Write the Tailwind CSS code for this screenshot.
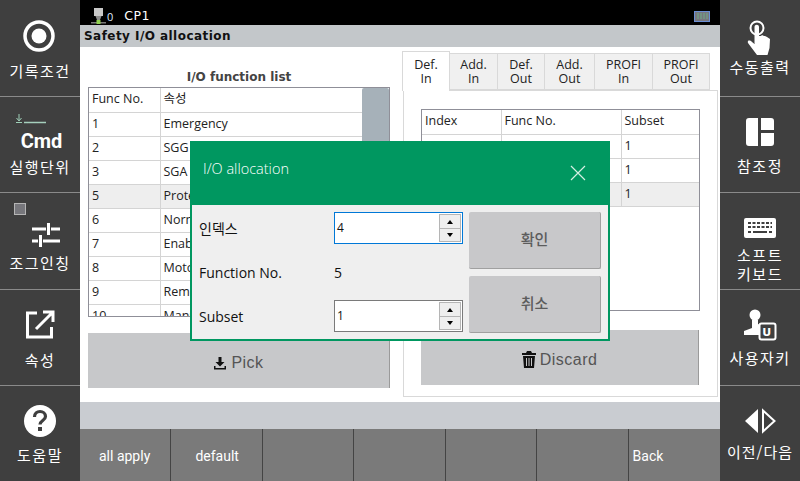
<!DOCTYPE html>
<html lang="ko">
<head>
  <meta charset="UTF-8">
  <title>Safety I/O allocation</title>
  <script src="https://cdn.jsdelivr.net/npm/@tailwindcss/browser@4"></script>
</head>
<body class="bg-white">
  <div class="relative flex w-[800px] h-[481px] overflow-hidden font-['Open_Sans','Noto_Sans_CJK_KR',sans-serif] text-[12.500px] text-[#222]">

    <!-- left side menu -->
    <aside class="w-[80px] shrink-0 bg-[#3f3f3f] text-white flex flex-col text-center font-['Noto_Sans_CJK_KR',sans-serif] text-[15px] leading-[20px] tracking-[1.500px]">
      <div class="h-[97px] border-b border-[#8a8a8a] pt-[16px]">
        <svg class="mx-auto" width="40" height="40" viewBox="0 0 40 40"><circle cx="19" cy="20" r="14" fill="none" stroke="#fff" stroke-width="3.500"/><circle cx="19" cy="20" r="7.500" fill="#fff"/></svg>
        <div class="mt-[5px]">기록조건</div>
      </div>
      <div class="relative h-[96px] border-b border-[#8a8a8a] pt-[33px]">
        <svg class="absolute left-[15px] top-[17px]" width="32" height="10" viewBox="0 0 32 10"><path d="M4 0v6M1.500 4L4 7l2.500-3M1 8.500h6" stroke="#9fd0b8" fill="none"/><path d="M9 8.500h22" stroke="#a5cfbc" stroke-width="1.500"/></svg>
        <div class="font-['Roboto',sans-serif] font-bold text-[20px] leading-[22px] tracking-normal pl-[3px]">Cmd</div>
        <div class="mt-[5px]">실행단위</div>
      </div>
      <div class="relative h-[97px] border-b border-[#8a8a8a] pt-[29px]">
        <span class="absolute left-[14px] top-[10px] w-[12px] h-[12px] bg-[#77777c] border border-[#b5b5b5]"></span>
        <svg class="ml-[31px]" width="30" height="26" viewBox="0 0 30 26" fill="none" stroke="#fff" stroke-width="3"><path d="M1 7h14M20 7h9M1 19h6M12 19h17M17.500 1v12M9.500 13v12"/></svg>
        <div class="mt-[5px]">조그인칭</div>
      </div>
      <div class="h-[96px] border-b border-[#8a8a8a] pt-[19px]">
        <svg class="mx-auto" width="32" height="32" viewBox="0 0 32 32" fill="none" stroke="#fff" stroke-width="3"><path d="M13 4H3.500v24h24V18M19 3h10v10M28 4L12 20"/></svg>
        <div class="mt-[9px]">속성</div>
      </div>
      <div class="flex-1 pt-[18px]">
        <svg class="mx-auto" width="34" height="34" viewBox="0 0 34 34"><circle cx="17" cy="17" r="16" fill="#fff"/><path d="M11.500 13c0-3.500 2.500-5.500 5.500-5.500s5.500 2 5.500 5c0 4-5.500 4-5.500 8" fill="none" stroke="#3f3f3f" stroke-width="3.200"/><rect x="15" y="23" width="4" height="4" fill="#3f3f3f"/></svg>
        <div class="mt-[7px]">도움말</div>
      </div>
    </aside>

    <!-- center -->
    <main class="relative w-[640px] shrink-0 flex flex-col">
      <header class="h-[25px] bg-black text-white flex items-center pl-[10px] pr-[10px] pt-[7px]">
        <svg width="18" height="18" viewBox="0 0 18 18"><rect x="4" y="1" width="9" height="8" fill="#c9c9c9"/><path d="M5.500 9h6l-1.500 4H7z" fill="#8d8d8d"/><rect x="1" y="15" width="15" height="1.500" fill="#777"/><rect x="6.500" y="13" width="4" height="4" fill="#8fd14f"/></svg>
        <span class="text-[11px] text-[#dfe8ff] -ml-[1px] mt-[3px]">0</span>
        <span class="ml-[11px] font-['DejaVu_Sans',sans-serif] text-[12.500px] tracking-[0.500px]">CP1</span>
        <svg class="ml-auto" width="16" height="11" viewBox="0 0 16 11"><rect x="0.500" y="0.500" width="15" height="10" fill="#77777f" stroke="#6b8fd6"/><path d="M4 2v6M7 2v6M10 2v6M13 2v6" stroke="#6fae86"/></svg>
      </header>
      <div class="h-[22px] bg-[#c3c7ca] pl-[4px] font-['DejaVu_Sans',sans-serif] font-bold text-[12px] leading-[23px] tracking-[0.450px] text-[#111]">Safety I/O allocation</div>

      <div class="h-[355px] flex bg-white">
        <!-- function list -->
        <section class="w-[323px] shrink-0 pl-[8px] pr-[13px]">
          <h2 class="h-[40px] pt-[21px] text-center font-['DejaVu_Sans',sans-serif] font-bold text-[12px] leading-[18px] text-[#444]">I/O function list</h2>
          <div class="relative h-[230px] border border-[#8f8f98] overflow-hidden">
            <table class="w-[273px] table-fixed border-collapse text-left">
              <colgroup><col class="w-[71px]"><col></colgroup>
              <tbody class="[&_td]:h-[24px] [&_td]:px-[3px] [&_td]:border-b [&_td]:border-[#d4d4d4] [&_td:first-child]:border-r">
                <tr><td>Func No.</td><td>속성</td></tr>
                <tr><td>1</td><td>Emergency</td></tr>
                <tr><td>2</td><td>SGG</td></tr>
                <tr><td>3</td><td>SGA</td></tr>
                <tr class="bg-[#eeeeee]"><td>5</td><td>Protective</td></tr>
                <tr><td>6</td><td>Normal</td></tr>
                <tr><td>7</td><td>Enable</td></tr>
                <tr><td>8</td><td>Motor</td></tr>
                <tr><td>9</td><td>Remote</td></tr>
                <tr><td>10</td><td>Manual</td></tr>
              </tbody>
            </table>
            <span class="absolute right-0 top-0 w-[27px] h-[120px] bg-[#a6b1b9] rounded-t-[2px]"></span>
          </div>
          <button class="mt-[16px] w-full h-[55px] pt-[4px] bg-[#c7c8ca] border-r border-[#9a9a9a] flex items-center justify-center gap-[4px] font-['Liberation_Sans',sans-serif] text-[16px] text-[#555] tracking-[0.500px]">
            <svg width="14" height="14" viewBox="0 0 14 14" fill="#111"><path d="M5.500 1h3v5h3L7 10.500 2.500 6h3z"/><path d="M1 10h1.500v2h9v-2H13v3.500H1z"/></svg>
            Pick
          </button>
        </section>

        <!-- allocation tabs -->
        <section class="flex-1 pt-[4px]">
          <div class="flex h-[39px] text-center text-[12.500px] leading-[14px] [&>div]:border [&>div]:border-[#d9d9d9] [&>div]:bg-[#f0f0f0] [&>div]:pt-[4px] [&>div]:mt-[2px] [&>div]:-ml-px">
            <div class="w-[48px] !mt-0 !bg-white !border-b-0 relative z-10 h-[40px] !pt-[6px]">Def.<br>In</div>
            <div class="w-[49px]">Add.<br>In</div>
            <div class="w-[48px]">Def.<br>Out</div>
            <div class="w-[51px]">Add.<br>Out</div>
            <div class="w-[59px]">PROFI<br>In</div>
            <div class="w-[58px]">PROFI<br>Out</div>
          </div>
          <div class="w-[315px] h-[307px] border border-[#d9d9d9] px-[17px] pt-[18px]">
            <div class="h-[202px] w-[279px] border border-[#8f8f98]">
              <table class="w-full table-fixed border-collapse text-left">
                <colgroup><col class="w-[79px]"><col class="w-[120px]"><col></colgroup>
                <tbody class="[&_td]:h-[24px] [&_td]:px-[3px] [&_td]:border-b [&_td]:border-[#d4d4d4] [&_td:not(:last-child)]:border-r">
                  <tr><td>Index</td><td>Func No.</td><td>Subset</td></tr>
                  <tr><td>1</td><td>1</td><td>1</td></tr>
                  <tr><td>2</td><td>2</td><td>1</td></tr>
                  <tr class="bg-[#eeeeee]"><td>3</td><td>3</td><td>1</td></tr>
                </tbody>
              </table>
            </div>
            <button class="mt-[19px] w-[278px] h-[55px] pt-[4px] bg-[#c7c8ca] border-r border-[#9a9a9a] flex items-center justify-center gap-[4px] font-['Liberation_Sans',sans-serif] text-[16px] text-[#555] tracking-[0.500px]">
              <svg width="14" height="17" viewBox="0 0 14 17" fill="#111"><path d="M5 0h4l1 2h4v2H0V2h4z"/><path d="M1 5h12l-1 12H2zM4 7v8h1V7zm2.500 0v8h1V7zM9 7v8h1V7z" fill-rule="evenodd"/></svg>
              Discard
            </button>
          </div>
        </section>
      </div>

      <div class="h-[27px] bg-[#c9ccd1]"></div>
      <!-- function keys -->
      <footer class="flex-1 grid grid-cols-7 bg-[#7a7a7a] text-white font-['Roboto',sans-serif] text-[14px] [&>div]:border-r [&>div]:border-[#444] [&>div]:pt-[17px] [&>div]:leading-[20px]">
        <div class="pl-[19px]">all apply</div>
        <div class="pl-[24px]">default</div>
        <div></div>
        <div></div>
        <div></div>
        <div></div>
        <div class="!border-r-0 pl-[4px]">Back</div>
      </footer>
    </main>

    <!-- right side menu -->
    <aside class="w-[80px] shrink-0 bg-[#3f3f3f] text-white flex flex-col text-center font-['Noto_Sans_CJK_KR',sans-serif] text-[15px] leading-[20px] tracking-[1.500px]">
      <div class="h-[97px] border-b border-[#8a8a8a] pt-[20px]">
        <svg class="mx-auto" width="26" height="36" viewBox="0 0 26 36"><circle cx="10" cy="8" r="6.500" fill="none" stroke="#fff" stroke-width="2"/><path d="M7.500 7c0-3 4.500-3 4.500 0v9l2 0 1-1 2 1 1 0 2 1 3 2-.5 9-2 7H10L1 23c-1-3 2-3 4-1l2.500 2z" fill="#fff"/></svg>
        <div class="mt-[1px]">수동출력</div>
      </div>
      <div class="h-[96px] border-b border-[#8a8a8a] pt-[21px]">
        <svg class="mx-auto" width="28" height="28" viewBox="0 0 28 28" fill="#fff"><path d="M3 0h9v28H3a3 3 0 0 1-3-3V3a3 3 0 0 1 3-3zM15 0h10a3 3 0 0 1 3 3v9H15zM15 15h13v10a3 3 0 0 1-3 3H15z"/></svg>
        <div class="mt-[10px]">참조정</div>
      </div>
      <div class="h-[97px] border-b border-[#8a8a8a] pt-[25px]">
        <svg class="mx-auto" width="32" height="20" viewBox="0 0 32 20"><rect width="32" height="20" rx="2" fill="#fff"/><path d="M4 5h24M4 9h24" stroke="#3f3f3f" stroke-width="2" stroke-dasharray="3 1.500"/><path d="M4 14h3M9 14h14M25 14h3" stroke="#3f3f3f" stroke-width="2"/></svg>
        <div class="mt-[7px] leading-[19px]">소프트<br>키보드</div>
      </div>
      <div class="relative h-[96px] border-b border-[#8a8a8a] pt-[18px]">
        <svg class="ml-[22px]" width="36" height="36" viewBox="0 0 36 36"><circle cx="13" cy="7" r="5.500" fill="#fff"/><path d="M10 12h6v4l5 2v3h-3v6H2v-4l8-3z" fill="#fff"/><rect x="17.500" y="15.500" width="16" height="16" rx="2" fill="#3f3f3f" stroke="#fff" stroke-width="2"/><text x="25.500" y="28" text-anchor="middle" font-family="DejaVu Sans" font-weight="700" font-size="11" fill="#fff">U</text></svg>
        <div class="mt-[4px]">사용자키</div>
      </div>
      <div class="flex-1 pt-[22px]">
        <svg class="mx-auto" width="32" height="26" viewBox="0 0 32 26"><path d="M14 1v24L1 13z" fill="#fff"/><path d="M19 2.500v21L30.500 13z" fill="none" stroke="#fff" stroke-width="2"/></svg>
        <div class="mt-[8px] tracking-[1px]">이전/다음</div>
      </div>
    </aside>

    <!-- modal dialog -->
    <div class="absolute left-[190px] top-[141px] w-[420px] h-[200px] border-2 border-t-0 border-[#009760] bg-[#efefef]">
      <div class="-mx-[2px] h-[64px] bg-[#009760] text-white flex items-center justify-between pl-[13px] pr-[24px] text-[14.500px]">
        <span class="font-light mb-[8px]">I/O allocation</span>
        <svg width="16" height="16" viewBox="0 0 16 16" stroke="#d5efe3" stroke-width="1.200"><path d="M1 1l14 14M15 1L1 15"/></svg>
      </div>
      <div class="flex pl-[7px] pt-[7px] text-[14px] text-[#111]">
        <div class="w-[270px]">
          <div class="flex items-center h-[32px]">
            <span class="w-[135px]">인덱스</span>
            <div class="flex items-center w-[129px] h-[32px] bg-white border border-[#0078d7] pl-[2px] pr-[1px] text-[12px]">
              <span class="flex-1">4</span>
              <div class="w-[22px] h-[28px] border border-[#b5b5b5] bg-[#eeeeee] flex flex-col items-stretch">
                <span class="h-[14px] border-b border-[#b5b5b5] flex items-center justify-center"><svg width="6" height="4" viewBox="0 0 6 4"><path d="M3 0l3 4H0z" fill="#000"/></svg></span>
                <span class="flex-1 flex items-center justify-center"><svg width="6" height="4" viewBox="0 0 6 4"><path d="M0 0h6L3 4z" fill="#000"/></svg></span>
              </div>
            </div>
          </div>
          <div class="flex items-center h-[56px]">
            <span class="w-[135px]">Function No.</span><span>5</span>
          </div>
          <div class="flex items-center h-[32px]">
            <span class="w-[135px]">Subset</span>
            <div class="flex items-center w-[129px] h-[32px] bg-white border border-[#7a7a7a] pl-[2px] pr-[1px] text-[12px]">
              <span class="flex-1">1</span>
              <div class="w-[22px] h-[28px] border border-[#b5b5b5] bg-[#eeeeee] flex flex-col items-stretch">
                <span class="h-[14px] border-b border-[#b5b5b5] flex items-center justify-center"><svg width="6" height="4" viewBox="0 0 6 4"><path d="M3 0l3 4H0z" fill="#000"/></svg></span>
                <span class="flex-1 flex items-center justify-center"><svg width="6" height="4" viewBox="0 0 6 4"><path d="M0 0h6L3 4z" fill="#000"/></svg></span>
              </div>
            </div>
          </div>
        </div>
        <div class="flex flex-col gap-[7px] w-[132px] font-['Noto_Sans_CJK_KR',sans-serif] text-[15px] font-medium text-[#5c5c5c]">
          <button class="h-[57px] pb-[2px] bg-[#c8c8ca] rounded-[2px] border-b border-r border-[#a0a0a0]">확인</button>
          <button class="h-[57px] pb-[2px] bg-[#c8c8ca] rounded-[2px] border-b border-r border-[#a0a0a0]">취소</button>
        </div>
      </div>
    </div>
  </div>
</body>
</html>
